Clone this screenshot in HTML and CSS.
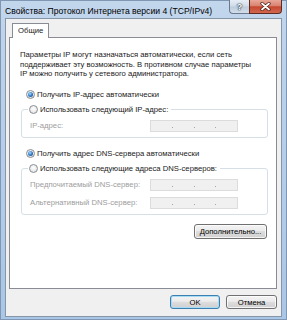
FILE: index.html
```html
<!DOCTYPE html>
<html>
<head>
    <meta charset="UTF-8">
    <link rel="stylesheet" href="styles.css">
</head>
<body>
<div class="window">
    <div class="titlebar">
        <span class="title">Свойства: Протокол Интернета версии 4 (TCP/IPv4)</span>
        <div class="caption">
            <span class="cap-btn help">?</span>
            <span class="cap-btn close">
                <svg width="11" height="9" viewBox="0 0 11 9">
                    <path d="M2 1.5 L9 7.5 M9 1.5 L2 7.5" stroke="#4a1c14" stroke-width="3.2" stroke-linecap="round"/>
                    <path d="M2 1.5 L9 7.5 M9 1.5 L2 7.5" stroke="#fff" stroke-width="1.8" stroke-linecap="round"/>
                </svg>
            </span>
        </div>
    </div>
    <div class="client">
        <div class="tabs"><span class="tab">Общие</span></div>
        <div class="panel">
            <p class="intro">Параметры IP могут назначаться автоматически, если сеть<br>поддерживает эту возможность. В противном случае параметры<br>IP можно получить у сетевого администратора.</p>

            <div class="option first"><span class="radio checked"></span>Получить IP-адрес автоматически</div>
            <fieldset class="group">
                <legend><span class="option"><span class="radio"></span>Использовать следующий IP-адрес:</span></legend>
                <div class="field"><span class="field-label">IP-адрес:</span><span class="ipbox"><i></i><i></i><i></i></span></div>
            </fieldset>

            <div class="option"><span class="radio checked"></span>Получить адрес DNS-сервера автоматически</div>
            <fieldset class="group">
                <legend><span class="option"><span class="radio"></span>Использовать следующие адреса DNS-серверов:</span></legend>
                <div class="field"><span class="field-label">Предпочитаемый DNS-сервер:</span><span class="ipbox"><i></i><i></i><i></i></span></div>
                <div class="field second"><span class="field-label">Альтернативный DNS-сервер:</span><span class="ipbox tall"><i></i><i></i><i></i></span></div>
            </fieldset>

            <div class="actions"><button class="btn btn-adv">Дополнительно...</button></div>
        </div>
        <div class="footer">
            <button class="btn btn-ok default">OK</button>
            <button class="btn btn-cancel">Отмена</button>
        </div>
    </div>
</div>
</body>
</html>
```

FILE: styles.css
```css
body {
    margin: 0;
    padding: 0;
    font-family: "Liberation Sans", Arial, sans-serif;
    font-size: 7.7px;
    color: #1a1a1a;
}

.window {
    width: 287px;
    height: 320px;
    box-sizing: border-box;
    padding: 0 5px 3px 5px;
    background: linear-gradient(#c2d6ec, #b9d0ea 30%, #aac6e6 100%);
    box-shadow: inset 0 0 0 1px #7f97b3;
}

.titlebar {
    height: 18px;
    display: flex;
    align-items: flex-start;
}

.title {
    padding-top: 6px;
    font-size: 8.6px;
    line-height: 10px;
    color: #000;
}

.caption {
    margin-left: auto;
    display: flex;
}

.cap-btn {
    height: 14px;
    box-sizing: border-box;
    border: 1px solid #6b7b8e;
    border-top: none;
    display: flex;
    align-items: center;
    justify-content: center;
}

.help {
    width: 20px;
    border-radius: 0 0 0 4px;
    border-right: none;
    background: linear-gradient(#e6edf5, #d0dbe8 48%, #bccbdc 52%, #d3deea);
    color: #fff;
    font-weight: bold;
    font-size: 9px;
    text-shadow: 0 0 1px #2f3f52, 0 0 1px #2f3f52, 0 0 2px #2f3f52;
}

.close {
    width: 33px;
    border-radius: 0 0 4px 0;
    border-color: #5e2a22;
    background: linear-gradient(#e9a898, #d98270 45%, #c6472f 52%, #d2674f);
}

.close svg {
    display: block;
}

.client {
    height: 299px;
    box-sizing: border-box;
    border: 1px solid #8795a8;
    background-color: #f0f0f0;
    padding: 4px 4px 0 3px;
}

.tabs {
    height: 15px;
    padding-left: 3px;
    display: flex;
}

.tab {
    position: relative;
    z-index: 1;
    height: 15px;
    box-sizing: border-box;
    border: 1px solid #898c95;
    border-bottom: none;
    background-color: #fff;
    padding: 0 5px;
    line-height: 14px;
}

.panel {
    height: 252px;
    margin-top: -1px;
    box-sizing: border-box;
    border: 1px solid #898c95;
    background-color: #fff;
    padding: 12px 8px 0 10px;
}

.intro {
    margin: 0;
    line-height: 9.5px;
}

.option {
    display: flex;
    align-items: center;
    height: 10px;
    line-height: 10px;
    margin: 11px 0 0 6px;
    white-space: nowrap;
}

legend .option {
    margin: 0;
}

.radio {
    width: 9px;
    height: 9px;
    box-sizing: border-box;
    border: 1px solid #8a8f96;
    border-radius: 50%;
    background: radial-gradient(circle at 50% 40%, #ffffff 0%, #ececec 55%, #cfd2d6 100%);
    margin-right: 2px;
    display: flex;
    align-items: center;
    justify-content: center;
}

.radio.checked::after {
    content: "";
    width: 5px;
    height: 5px;
    border-radius: 50%;
    background: radial-gradient(circle at 40% 35%, #a6dcff 0%, #2b74bf 55%, #12457f 100%);
}

.group {
    margin: 5px 0 0 1px;
    padding: 5px 29px 5px 8px;
    border: 1px solid #d5dfe5;
    border-radius: 3px;
    min-width: 0;
}

.group legend {
    padding: 0 3px 0 1px;
    margin-left: -2px;
}

.field {
    display: flex;
    align-items: center;
    height: 12px;
}

.field.second {
    margin-top: 6px;
}

.field-label {
    width: 120px;
    color: #9d9d9d;
    white-space: nowrap;
}

.ipbox {
    width: 88px;
    height: 12px;
    box-sizing: border-box;
    border: 1px solid #dcdcdc;
    background-color: #f0f0f0;
    display: flex;
    justify-content: space-evenly;
    align-items: flex-end;
    padding-bottom: 3px;
}

.ipbox i {
    width: 1px;
    height: 1px;
    background-color: #a6a6a6;
}

.actions {
    display: flex;
    justify-content: flex-end;
    margin: 9px 1px 0 0;
}

.footer {
    display: flex;
    justify-content: flex-end;
    gap: 6px;
    margin-top: 6px;
}

.btn {
    font: inherit;
    color: #000;
    height: 14px;
    box-sizing: border-box;
    padding: 0;
    border: 1px solid #707070;
    border-radius: 3px;
    background: linear-gradient(#f3f3f3 0%, #ebebeb 45%, #dddddd 50%, #d0d0d0 100%);
    box-shadow: inset 0 0 0 1px rgba(255, 255, 255, 0.75);
}

.btn-adv {
    width: 73px;
    height: 15px;
}

.btn-ok {
    width: 50px;
}

.btn-cancel {
    width: 51px;
}

.default {
    border-color: #3c7fb1;
    box-shadow: inset 0 0 0 1px #a8dcf5;
}
```
